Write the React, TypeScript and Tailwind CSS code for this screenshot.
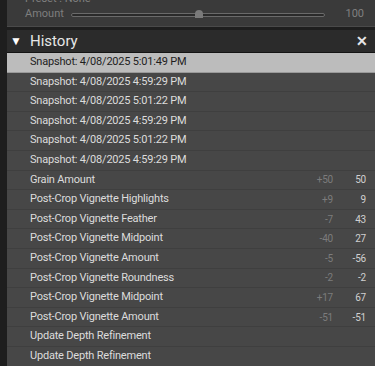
import React from "react";

const snapshots = [
  "Snapshot: 4/08/2025 5:01:49 PM",
  "Snapshot: 4/08/2025 4:59:29 PM",
  "Snapshot: 4/08/2025 5:01:22 PM",
  "Snapshot: 4/08/2025 4:59:29 PM",
  "Snapshot: 4/08/2025 5:01:22 PM",
  "Snapshot: 4/08/2025 4:59:29 PM",
];

const steps: [string, string, string][] = [
  ["Grain Amount", "+50", "50"],
  ["Post-Crop Vignette Highlights", "+9", "9"],
  ["Post-Crop Vignette Feather", "-7", "43"],
  ["Post-Crop Vignette Midpoint", "-40", "27"],
  ["Post-Crop Vignette Amount", "-5", "-56"],
  ["Post-Crop Vignette Roundness", "-2", "-2"],
  ["Post-Crop Vignette Midpoint", "+17", "67"],
  ["Post-Crop Vignette Amount", "-51", "-51"],
  ["Update Depth Refinement", "", ""],
  ["Update Depth Refinement", "", ""],
];

export default function App() {
  return (
    <div
      className="w-[375px] h-[366px] overflow-hidden bg-[#1e1e1e] flex"
      style={{ fontFamily: 'Roboto, "Open Sans", sans-serif' }}
    >
      <div className="w-[7px] shrink-0 bg-[#1e1e1e]" />
      <div className="flex-1 flex flex-col">
        {/* top panel remnant */}
        <div className="h-[27px] shrink-0 bg-[#3a3a3a] border-b border-[#4a4a4a] relative flex items-center pl-[18px] pr-[11px] pt-[3px]">
          <div className="absolute left-[18px] -top-[9px] text-[11px] text-[#808080]">Preset : None</div>
          <div className="text-[11px] text-[#7e7e7e] w-[46px]">Amount</div>
          <div className="relative w-[254px] h-[4px] border border-[#6a6a6a] rounded-full bg-[#2a2a2a]">
            <div className="absolute left-[123px] -top-[4px] w-[8px] h-[8px] rounded-t-full rounded-b-[1px] bg-[#7a7a7a]" />
          </div>
          <div className="flex-1 text-right text-[11px] text-[#808080]">100</div>
        </div>
        <div className="h-[3px] shrink-0 bg-[#1e1e1e]" />
        {/* header */}
        <div className="h-[23px] shrink-0 bg-[#2b2b2b] flex items-center pl-[3px] pr-[7px] border-b border-[#141414]">
          <span className="text-white text-[12px] leading-none w-[20px]">▼</span>
          <span className="text-[#e6e6e6] text-[15px] leading-none">History</span>
          <span className="ml-auto text-[#e6e6e6] text-[14px] font-bold leading-none">✕</span>
        </div>
        {/* rows */}
        <div className="flex flex-col">
          {snapshots.map((s, i) => (
            <div
              key={i}
              className={`h-[19.6px] shrink-0 flex items-center pl-[23px] pr-[9px] text-[11px] tracking-[-0.2px] border-b ${
                i === 0
                  ? "bg-[#bcbcbc] text-[#1e1e1e] border-[#9a9a9a]"
                  : "bg-[#474747] text-[#dcdcdc] border-[#3f3f3f]"
              }`}
            >
              {s}
            </div>
          ))}
          {steps.map(([label, d, v], i) => (
            <div
              key={i}
              className="h-[19.6px] shrink-0 flex items-center pl-[23px] pr-[9px] text-[11px] tracking-[-0.2px] bg-[#474747] text-[#dcdcdc] border-b border-[#3f3f3f]"
            >
              <span className="flex-1">{label}</span>
              <span className="w-[40px] text-right text-[#7c7c7c] text-[10px]">{d}</span>
              <span className="w-[33px] text-right text-[#d0d0d0] text-[10px]">{v}</span>
            </div>
          ))}
        </div>
      </div>
    </div>
  );
}
